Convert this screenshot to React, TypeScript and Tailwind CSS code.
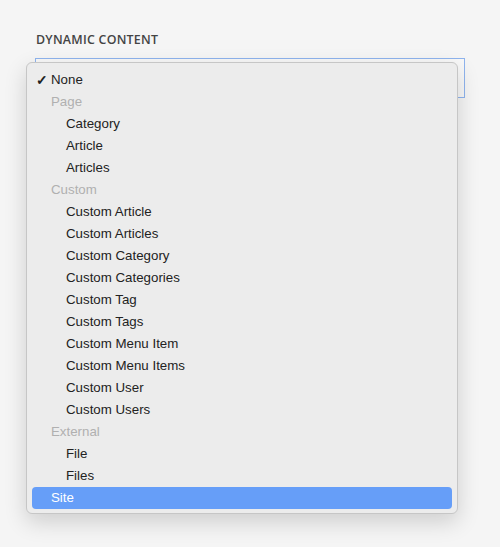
import React from "react";

type Item = { label: string; kind: "opt" | "group" | "sub"; checked?: boolean; selected?: boolean };

const items: Item[] = [
  { label: "None", kind: "opt", checked: true },
  { label: "Page", kind: "group" },
  { label: "Category", kind: "sub" },
  { label: "Article", kind: "sub" },
  { label: "Articles", kind: "sub" },
  { label: "Custom", kind: "group" },
  { label: "Custom Article", kind: "sub" },
  { label: "Custom Articles", kind: "sub" },
  { label: "Custom Category", kind: "sub" },
  { label: "Custom Categories", kind: "sub" },
  { label: "Custom Tag", kind: "sub" },
  { label: "Custom Tags", kind: "sub" },
  { label: "Custom Menu Item", kind: "sub" },
  { label: "Custom Menu Items", kind: "sub" },
  { label: "Custom User", kind: "sub" },
  { label: "Custom Users", kind: "sub" },
  { label: "External", kind: "group" },
  { label: "File", kind: "sub" },
  { label: "Files", kind: "sub" },
  { label: "Site", kind: "opt", selected: true },
];

export default function App() {
  return (
    <div className="w-[500px] h-[547px] bg-[#f5f5f5] relative overflow-hidden" style={{ fontFamily: '"Liberation Sans", Arial, sans-serif' }}>
      <div className="pt-[32px] pl-[36px] pr-[35px]">
        <div className="text-[12.4px] font-semibold tracking-[0.02em] text-[#444] leading-[15px]" style={{ fontFamily: '"Open Sans", sans-serif' }}>
          DYNAMIC CONTENT
        </div>
        <div className="mt-[11px] ml-[-1px] h-[40px] border border-[#8fb4ee] bg-[#f8f8f8]" />
      </div>
      <div className="absolute left-[26px] top-[62px] w-[432px] h-[452px] rounded-[6px] bg-[#ececec] border border-[#c6c6c6] shadow-[0_8px_22px_rgba(0,0,0,0.16)] pt-[6px] px-[5px]">
        {items.map((it) => (
          <div
            key={it.label}
            className={
              "h-[22px] flex items-center rounded-[4px] text-[13.3px] " +
              (it.selected ? "bg-[#669ef8] text-white" : it.kind === "group" ? "text-[#b0b0b0]" : "text-[#222]")
            }
          >
            <span className="w-[19px] pl-[4px] text-[14px] font-semibold">{it.checked ? "✓" : ""}</span>
            <span className={it.kind === "sub" ? "pl-[15px]" : ""}>{it.label}</span>
          </div>
        ))}
      </div>
    </div>
  );
}
